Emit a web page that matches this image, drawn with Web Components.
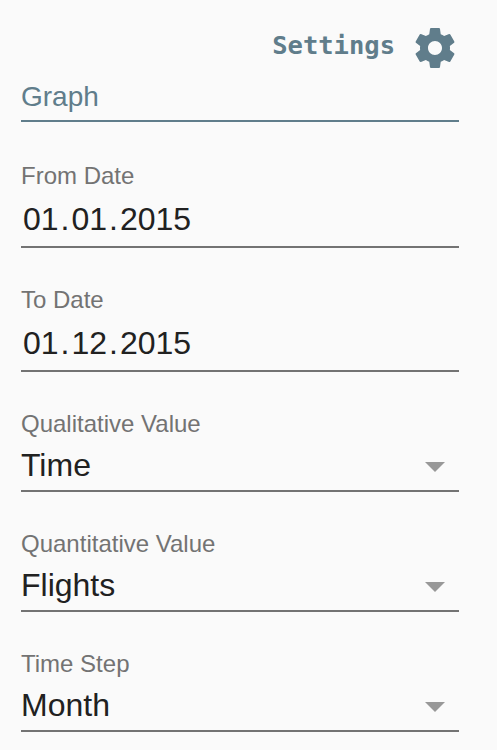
<!DOCTYPE html>
<html lang="en"><head><meta charset="utf-8"><title>Settings</title>
<style>html,body{margin:0;background:#fafafa}</style></head><body>
<settings-panel>
<settings-header></settings-header>
<section-title>Graph</section-title>
<form-field kind="date" label="From Date" value="01.01.2015"></form-field>
<form-field kind="date" label="To Date" value="01.12.2015"></form-field>
<form-field kind="select" label="Qualitative Value" value="Time"></form-field>
<form-field kind="select" label="Quantitative Value" value="Flights"></form-field>
<form-field kind="select" label="Time Step" value="Month"></form-field>
</settings-panel>
<script>
const define = (name, html, setup) => customElements.define(name, class extends HTMLElement {
  connectedCallback() {
    if (this.shadowRoot) return;
    const root = this.attachShadow({mode: 'open'});
    root.innerHTML = html;
    if (setup) setup(this, root);
  }
});
define('settings-panel', `<style>:host{display:flex;flex-direction:column;box-sizing:border-box;height:750px;overflow:hidden;padding:24px 38px 0 21px;background:#fafafa;font-family:"Liberation Sans",Arial,sans-serif}::slotted(*){flex-shrink:0}</style><slot></slot>`);
define('settings-header', `<style>:host{display:flex;justify-content:flex-end;align-items:center;height:48px;gap:16px;color:#607d8b}
span{font:bold 25.5px/30px "DejaVu Sans Mono",monospace;padding-bottom:6px}svg{width:48px;height:48px;fill:currentColor}</style>
<span>Settings</span><svg viewBox="0 0 24 24"><path d="M19.43 12.98c.04-.32.07-.64.07-.98s-.03-.66-.07-.98l2.11-1.65c.19-.15.24-.42.12-.64l-2-3.46c-.12-.22-.39-.3-.61-.22l-2.49 1c-.52-.4-1.08-.73-1.69-.98l-.38-2.65C14.46 2.18 14.25 2 14 2h-4c-.25 0-.46.18-.49.42l-.38 2.65c-.61.25-1.17.59-1.69.98l-2.49-1c-.23-.09-.49 0-.61.22l-2 3.46c-.13.22-.07.49.12.64l2.11 1.65c-.04.32-.07.65-.07.98s.03.66.07.98l-2.11 1.65c-.19.15-.24.42-.12.64l2 3.46c.12.22.39.3.61.22l2.49-1c.52.4 1.08.73 1.69.98l.38 2.65c.03.24.24.42.49.42h4c.25 0 .46-.18.49-.42l.38-2.65c.61-.25 1.17-.59 1.69-.98l2.49 1c.23.09.49 0 .61-.22l2-3.46c.12-.22.07-.49-.12-.64l-2.11-1.65zM12 15.5c-1.93 0-3.5-1.57-3.5-3.5s1.57-3.5 3.5-3.5 3.5 1.57 3.5 3.5-1.57 3.5-3.5 3.5z"/></svg>`);
define('section-title', `<style>:host{display:block;box-sizing:border-box;height:50px;padding-top:8px;font-size:28px;line-height:34px;color:#607d8b;border-bottom:2px solid #607d8b}</style><slot></slot>`);
define('form-field', `<style>:host{display:flex;flex-direction:column;box-sizing:border-box;border-bottom:2px solid #737373;height:120px;padding-top:38px}
:host([kind=date]){height:124px}
:host(:first-of-type){height:126px;padding-top:40px}
.label{font-size:24px;line-height:28px;color:#737373}
.row{display:flex;justify-content:space-between;align-items:center;height:38px;margin-top:8px;font-size:32px;line-height:38px;color:#212121}
:host([kind=date]) .row{padding-left:2px;margin-top:10px}
.dot{margin:0 2px}
svg{width:20px;height:10px;margin:4px 14px 0 0;fill:#989898}</style><div class="label"></div><div class="row"><span class="value"></span></div>`, (host, root) => {
  root.querySelector('.label').textContent = host.getAttribute('label');
  const value = root.querySelector('.value');
  if (host.getAttribute('kind') === 'date') {
    value.innerHTML = host.getAttribute('value').split('.').join('<span class="dot">.</span>');
  } else {
    value.textContent = host.getAttribute('value');
    root.querySelector('.row').insertAdjacentHTML('beforeend', '<svg viewBox="0 0 20 10"><path d="M0 0H20L10 10Z"/></svg>');
  }
});
</script></body></html>
